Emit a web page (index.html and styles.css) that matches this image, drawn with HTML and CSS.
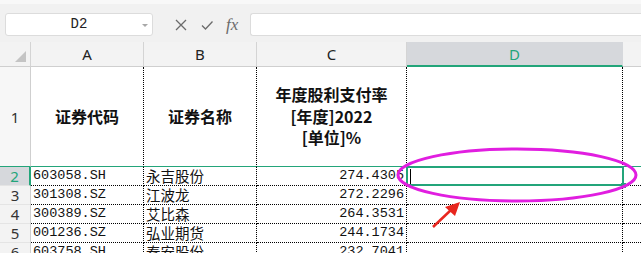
FILE: index.html
```html
<!DOCTYPE html>
<html lang="zh">
<head>
    <meta charset="UTF-8">
    <title>Sheet</title>
    <link rel="stylesheet" href="styles.css">
</head>
<body>
    <div class="toolbar">
        <div class="namebox">D2<span class="drop"></span></div>
        <div class="tools">
            <span class="tool">
                <svg width="14" height="14" viewBox="0 0 14 14"><path d="M2 2 L12 12 M12 2 L2 12" stroke="#6b6b6b" stroke-width="1.3" fill="none"/></svg>
            </span>
            <span class="tool">
                <svg width="14" height="14" viewBox="0 0 14 14"><path d="M2 7.5 L5.5 11 L12.5 3.5" stroke="#6b6b6b" stroke-width="1.3" fill="none"/></svg>
            </span>
            <span class="tool fx">fx</span>
        </div>
        <div class="formula"></div>
    </div>

    <div class="sheet">
        <div class="corner"><span class="tri"></span></div>
        <div class="colhead">A</div>
        <div class="colhead">B</div>
        <div class="colhead">C</div>
        <div class="colhead active">D</div>
        <div class="colhead last"></div>

        <div class="rowhead tall">1</div>
        <div class="cell title">证券代码</div>
        <div class="cell title">证券名称</div>
        <div class="cell title"><div>年度股利支付率</div><div>[年度]2022</div><div>[单位]%</div></div>
        <div class="cell title"></div>
        <div class="cell title last"></div>

        <div class="rowhead active">2</div>
        <div class="cell">603058.SH</div>
        <div class="cell name">永吉股份</div>
        <div class="cell num">274.4305</div>
        <div class="cell selected"><span class="caret"></span><span class="handle"></span></div>
        <div class="cell last"></div>

        <div class="rowhead">3</div>
        <div class="cell">301308.SZ</div>
        <div class="cell name">江波龙</div>
        <div class="cell num">272.2296</div>
        <div class="cell"></div>
        <div class="cell last"></div>

        <div class="rowhead">4</div>
        <div class="cell">300389.SZ</div>
        <div class="cell name">艾比森</div>
        <div class="cell num">264.3531</div>
        <div class="cell"></div>
        <div class="cell last"></div>

        <div class="rowhead">5</div>
        <div class="cell">001236.SZ</div>
        <div class="cell name">弘业期货</div>
        <div class="cell num">244.1734</div>
        <div class="cell"></div>
        <div class="cell last"></div>

        <div class="rowhead">6</div>
        <div class="cell">603758.SH</div>
        <div class="cell name">秦安股份</div>
        <div class="cell num">232.7041</div>
        <div class="cell"></div>
        <div class="cell last"></div>

        <svg class="mark" width="641" height="253" viewBox="0 0 641 253">
            <ellipse cx="517" cy="175" rx="119" ry="26" stroke="#e11ee0" stroke-width="3" fill="none"/>
            <path d="M433 227 L452 209" stroke="#e8261e" stroke-width="2.5" fill="none"/>
            <path d="M460 202 L445 207 L455 216 Z" fill="#e8261e"/>
        </svg>
    </div>
</body>
</html>
```

FILE: styles.css
```css
body {
    margin: 0;
    width: 641px;
    height: 253px;
    overflow: hidden;
    background: #fff;
    font-family: "Noto Sans", "Noto Sans CJK SC", sans-serif;
}

.toolbar {
    display: flex;
    align-items: center;
    height: 42px;
    box-sizing: border-box;
    padding: 13px 0 6px 5px;
    background: linear-gradient(#f8f8f8 0, #f8f8f8 4px, #f1f1f1 4px);
}

.namebox {
    position: relative;
    width: 148px;
    height: 23px;
    box-sizing: border-box;
    border: 1px solid #dcdcdc;
    border-radius: 3px;
    background: #fff;
    text-align: center;
    line-height: 21px;
    font-family: "Liberation Mono", monospace;
    font-size: 14px;
    color: #222;
}

.drop {
    position: absolute;
    right: 4px;
    top: 10px;
    border-left: 3px solid transparent;
    border-right: 3px solid transparent;
    border-top: 3px solid #a8a8a8;
}

.tools {
    display: flex;
    align-items: center;
    width: 97px;
    padding-left: 21px;
    box-sizing: border-box;
    gap: 12px;
}

.tool {
    display: flex;
    align-items: center;
    height: 23px;
}

.fx {
    font-family: "Liberation Serif", serif;
    font-style: italic;
    font-size: 17px;
    color: #6b6b6b;
}

.formula {
    flex: 1;
    height: 23px;
    box-sizing: border-box;
    border: 1px solid #dcdcdc;
    border-right: none;
    border-radius: 3px 0 0 3px;
    background: #fff;
}

.sheet {
    position: relative;
    display: grid;
    grid-template-columns: 31px 113px 113px 150px 216px 1fr;
    grid-template-rows: 25px 100px 19px 19px 19px 19px 19px;
}

.corner,
.colhead,
.rowhead {
    box-sizing: border-box;
    background: #f3f3f3;
    color: #222;
}

.corner {
    position: relative;
    border-right: 1px solid #d4d4d4;
    border-bottom: 1px solid #cfcfcf;
}

.tri {
    position: absolute;
    right: 4px;
    bottom: 4px;
    border-left: 11px solid transparent;
    border-bottom: 11px solid #c4c4c4;
}

.colhead {
    border-right: 1px solid #d4d4d4;
    border-bottom: 1px solid #cfcfcf;
    text-align: center;
    line-height: 24px;
    font-size: 15px;
}

.colhead.active {
    background: #d6d8dc;
    color: #23a57a;
    border-bottom: 2px solid #23a57a;
    border-right-color: #d6d8dc;
}

.colhead.last {
    border-right: none;
}

.rowhead {
    border-right: 1px solid #cfcfcf;
    border-bottom: 1px solid #e4e4e4;
    text-align: center;
    line-height: 18px;
    font-size: 15px;
    color: #333;
}

.rowhead.tall {
    display: flex;
    align-items: center;
    justify-content: center;
    border-bottom: 1px solid #23a57a;
    background: #f7f7f7;
}

.rowhead.active {
    background: #d6d8dc;
    color: #23a57a;
    border-right: 2px solid #23a57a;
}

.cell {
    box-sizing: border-box;
    border-right: 1px dotted #000;
    border-bottom: 1px dotted #000;
    padding-left: 2px;
    font-family: "Liberation Mono", monospace;
    font-size: 13.5px;
    line-height: 18px;
    color: #111;
    white-space: nowrap;
}

.cell.last {
    border-right: none;
}

.cell.name {
    font-family: "Noto Sans CJK SC", sans-serif;
    font-size: 14.5px;
}

.cell.num {
    text-align: right;
    padding-right: 2px;
}

.cell.title {
    display: flex;
    flex-direction: column;
    align-items: center;
    justify-content: center;
    text-align: center;
    padding: 0;
    font-family: "Noto Sans CJK SC", sans-serif;
    font-size: 16px;
    font-weight: bold;
    line-height: 21.5px;
    border-bottom: 1px solid #23a57a;
}

.cell.title.last {
    border-right: none;
}

.cell.selected {
    position: relative;
    border: 2px solid #23a57a;
    margin: -1px 0 0 -1px;
    width: 218px;
    height: 20px;
}

.caret {
    position: absolute;
    left: 2px;
    top: 1px;
    width: 1px;
    height: 15px;
    background: #000;
}

.handle {
    position: absolute;
    right: -4px;
    bottom: -4px;
    width: 5px;
    height: 5px;
    background: #23a57a;
}

.mark {
    position: absolute;
    left: 0;
    top: -42px;
    pointer-events: none;
}
```
